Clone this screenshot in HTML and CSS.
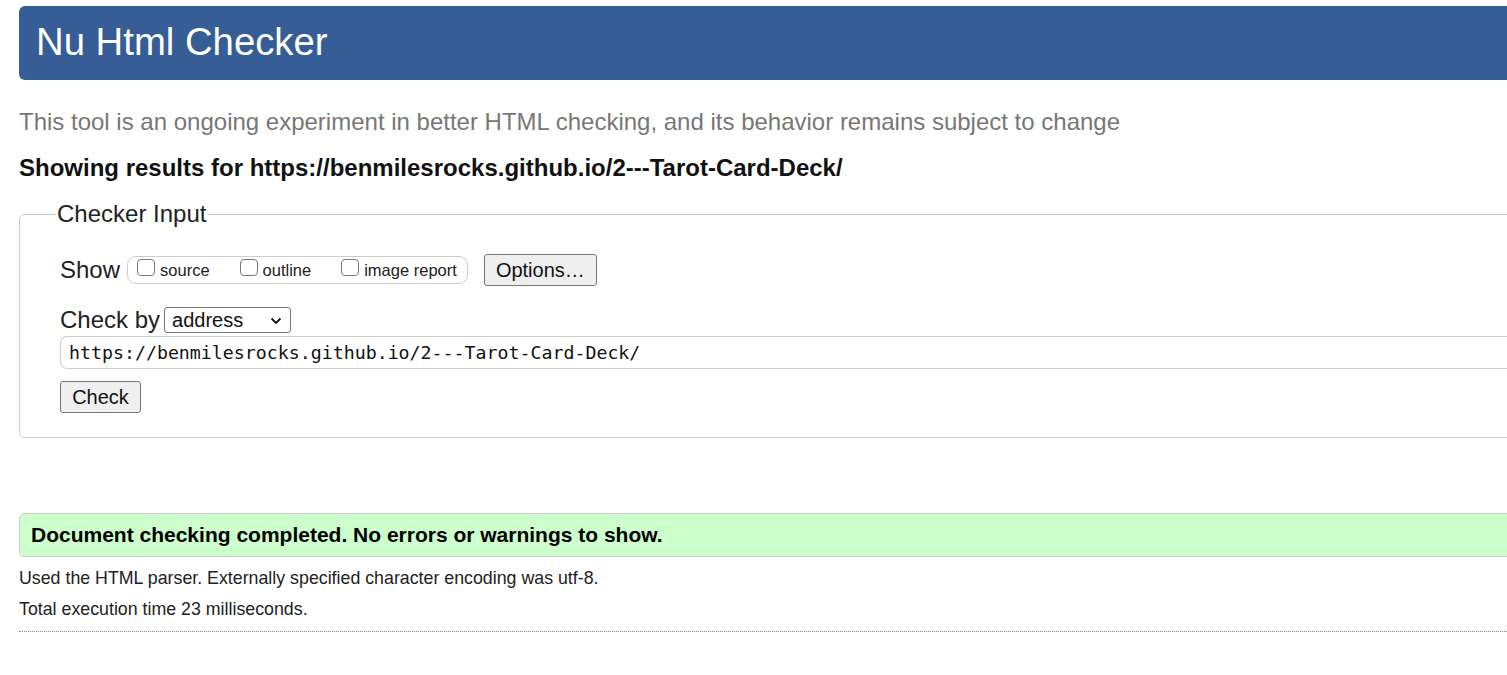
FILE: index.html
```html
<!DOCTYPE html>
<html lang="en">
<head>
<meta charset="utf-8">
<title>Nu Html Checker</title>
<link rel="stylesheet" href="styles.css">
</head>
<body>
<div class="page">
  <h1 class="banner">Nu Html Checker</h1>
  <p class="tagline">This tool is an ongoing experiment in better HTML checking, and its behavior remains subject to change</p>
  <p class="showing">Showing results for https://benmilesrocks.github.io/2---Tarot-Card-Deck/</p>
  <fieldset class="checker">
    <legend class="legend">Checker Input</legend>
    <div class="row show-row">
      <span class="label">Show</span>
      <span class="opts">
        <label class="opt"><span class="box"></span>source</label>
        <label class="opt"><span class="box"></span>outline</label>
        <label class="opt"><span class="box"></span>image report</label>
      </span>
      <span class="btn options-btn">Options…</span>
    </div>
    <div class="row by-row">
      <span class="label">Check by</span>
      <span class="select">address<svg class="chev" width="12" height="8" viewBox="0 0 12 8"><path d="M1.5 1.5 L6 6 L10.5 1.5" fill="none" stroke="#111" stroke-width="1.8"/></svg></span>
    </div>
    <div class="url">https://benmilesrocks.github.io/2---Tarot-Card-Deck/</div>
    <div class="row"><span class="btn check-btn">Check</span></div>
  </fieldset>
  <div class="success">Document checking completed. No errors or warnings to show.</div>
  <p class="meta">Used the HTML parser. Externally specified character encoding was utf-8.</p>
  <p class="meta meta2">Total execution time 23 milliseconds.</p>
  <hr class="rule">
</div>
</body>
</html>
```
FILE: styles.css
```css
html, body {
  margin: 0;
  padding: 0;
  overflow: hidden;
  background: #fff;
}
body {
  font-family: "Liberation Sans", Arial, sans-serif;
  color: #111;
}
.page {
  width: 1620px;
  padding-left: 19px;
  padding-top: 6px;
}
.banner {
  margin: 0;
  height: 74px;
  box-sizing: border-box;
  background: #365d95;
  color: #fff;
  font-weight: normal;
  font-size: 38.3px;
  line-height: 72px;
  padding: 0 0 2px 17px;
  border-radius: 6px;
}
.tagline {
  margin: 26px 0 0 0;
  font-size: 24px;
  line-height: 32px;
  color: #777;
}
.showing {
  margin: 16px 0 0 0;
  font-size: 24px;
  line-height: 28px;
  font-weight: bold;
  color: #111;
}
.checker {
  margin: 19px 0 0 0;
  border: 1px solid #ccc;
  border-radius: 5px;
  padding: 0 0 24px 40px;
  min-inline-size: 0;
}
.legend {
  font-size: 24px;
  padding: 0 1px;
  margin-left: -4px;
  line-height: 26px;
  color: #222;
}
.row {
  display: flex;
  align-items: center;
}
.label {
  font-size: 24px;
  color: #222;
}
.show-row {
  margin-top: 27px;
  height: 32px;
}
.opts {
  display: flex;
  align-items: center;
  height: 28px;
  box-sizing: border-box;
  margin-left: 7px;
  padding: 0 10px 0 9px;
  border: 1px solid #ccc;
  border-radius: 9px;
  font-size: 16.5px;
  color: #222;
}
.opt {
  display: flex;
  align-items: center;
  margin-right: 30px;
}
.opt:last-child { margin-right: 0; }
.box {
  width: 18px;
  height: 17px;
  border: 1.5px solid #767676;
  border-radius: 4px;
  margin-right: 5px;
  position: relative;
  top: -2.5px;
  box-sizing: border-box;
}
.btn {
  display: inline-flex;
  align-items: center;
  justify-content: center;
  box-sizing: border-box;
  background: #efefef;
  border: 1px solid #767676;
  border-radius: 3px;
  font-size: 20px;
  color: #111;
}
.options-btn {
  margin-left: 16px;
  width: 113px;
  height: 32px;
}
.by-row {
  margin-top: 20px;
  height: 28px;
}
.select {
  display: inline-flex;
  align-items: center;
  justify-content: space-between;
  box-sizing: border-box;
  width: 127px;
  height: 26px;
  margin-left: 4px;
  padding: 0 8px 0 7px;
  border: 1px solid #767676;
  border-radius: 3px;
  font-size: 20px;
  color: #111;
}
.chev { margin-top: 1px; }
.url {
  margin-top: 2px;
  height: 33px;
  box-sizing: border-box;
  border: 1px solid #ccc;
  border-right: none;
  border-radius: 7px 0 0 7px;
  padding-left: 8px;
  font-family: "DejaVu Sans Mono", "Liberation Mono", monospace;
  font-size: 18.25px;
  line-height: 31px;
  color: #111;
}
.check-btn {
  margin-top: 12px;
  width: 81px;
  height: 32px;
}
.success {
  margin-top: 75px;
  height: 44px;
  box-sizing: border-box;
  background: #ccffcc;
  border: 1px solid #ccc;
  border-radius: 5px;
  padding-left: 11px;
  font-weight: bold;
  font-size: 21px;
  line-height: 42px;
  color: #000;
}
.meta {
  margin: 11px 0 0 0;
  font-size: 17.8px;
  line-height: 20px;
  color: #222;
}
.meta2 { margin-top: 11px; }
.rule {
  margin: 12px 0 0 0;
  border: none;
  border-top: 1px dotted #888;
  height: 0;
}
```
